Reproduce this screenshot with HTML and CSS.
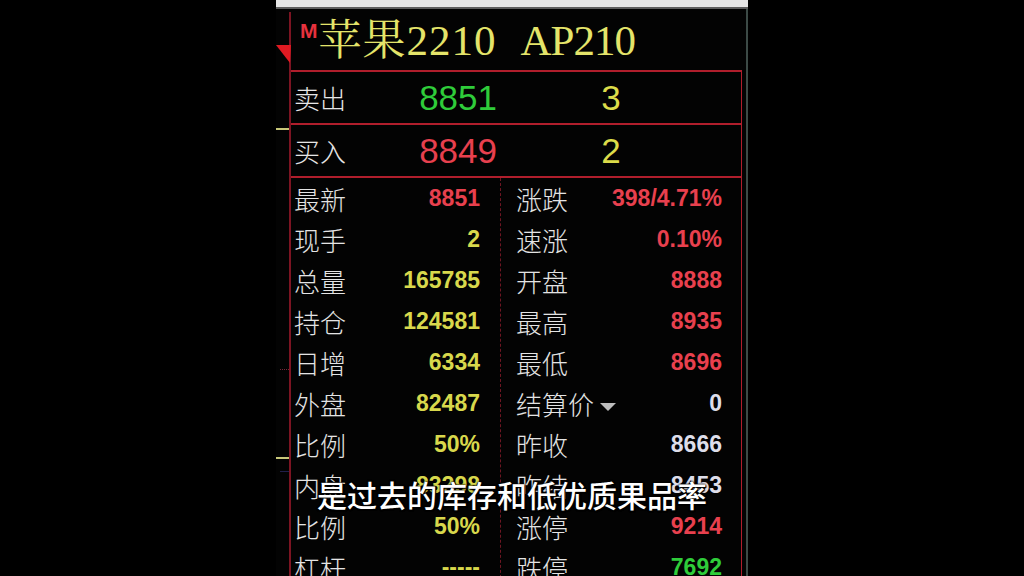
FILE: index.html
```html
<!DOCTYPE html>
<html lang="zh-CN">
<head>
<meta charset="utf-8">
<title>苹果2210</title>
<link rel="stylesheet" href="styles.css">
</head>
<body>
<div class="screen">
  <div class="panel">
    <div class="topbar"></div>
    <div class="frame">
      <div class="gutter">
        <svg class="marker" width="15" height="18" viewBox="0 0 15 18"><polygon points="0,0 15,0 14,18" fill="#e01a22"/></svg>
        <span class="tick tick-a"></span>
        <span class="tick tick-b"></span>
        <span class="tick tick-c"></span>
        <span class="tick tick-d"></span>
      </div>
      <div class="main">
        <div class="title"><span class="badge">M</span><span class="name">苹果2210</span><span class="code">AP210</span></div>
        <div class="quote">
          <div class="qrow"><span class="qlabel">卖出</span><span class="qprice green">8851</span><span class="qvol">3</span></div>
          <div class="qrow"><span class="qlabel">买入</span><span class="qprice red">8849</span><span class="qvol">2</span></div>
        </div>
        <div class="data">
          <div class="col col-left">
            <div class="row"><span class="lbl">最新</span><span class="val red">8851</span></div>
            <div class="row"><span class="lbl">现手</span><span class="val yellow">2</span></div>
            <div class="row"><span class="lbl">总量</span><span class="val yellow">165785</span></div>
            <div class="row"><span class="lbl">持仓</span><span class="val yellow">124581</span></div>
            <div class="row"><span class="lbl">日增</span><span class="val yellow">6334</span></div>
            <div class="row"><span class="lbl">外盘</span><span class="val yellow">82487</span></div>
            <div class="row"><span class="lbl">比例</span><span class="val yellow">50%</span></div>
            <div class="row"><span class="lbl">内盘</span><span class="val yellow">83298</span></div>
            <div class="row"><span class="lbl">比例</span><span class="val yellow">50%</span></div>
            <div class="row"><span class="lbl">杠杆</span><span class="val yellow">-----</span></div>
          </div>
          <div class="col col-right">
            <div class="row"><span class="lbl">涨跌</span><span class="val red">398/4.71%</span></div>
            <div class="row"><span class="lbl">速涨</span><span class="val red">0.10%</span></div>
            <div class="row"><span class="lbl">开盘</span><span class="val red">8888</span></div>
            <div class="row"><span class="lbl">最高</span><span class="val red">8935</span></div>
            <div class="row"><span class="lbl">最低</span><span class="val red">8696</span></div>
            <div class="row"><span class="lbl">结算价<span class="caret"></span></span><span class="val white">0</span></div>
            <div class="row"><span class="lbl">昨收</span><span class="val white">8666</span></div>
            <div class="row"><span class="lbl">昨结</span><span class="val white">8453</span></div>
            <div class="row"><span class="lbl">涨停</span><span class="val red">9214</span></div>
            <div class="row"><span class="lbl">跌停</span><span class="val green">7692</span></div>
          </div>
        </div>
      </div>
      <div class="edge"></div>
    </div>
  </div>
  <div class="subtitle">是过去的库存和低优质果品率</div>
</div>
</body>
</html>
```

FILE: styles.css
```css
* { box-sizing: border-box; }
html, body {
  margin: 0;
  padding: 0;
  background: #000;
}
body {
  width: 1024px;
  height: 576px;
  overflow: hidden;
  font-family: "Noto Sans CJK SC", "Liberation Sans", sans-serif;
}
.screen {
  position: relative;
  width: 1024px;
  height: 576px;
  overflow: hidden;
  background: #000;
}
.panel {
  margin-left: 276px;
  width: 472px;
  height: 576px;
  display: flex;
  flex-direction: column;
  background: #030303;
}
.topbar {
  height: 9px;
  flex: none;
  background: #e6e6e6;
  border-bottom: 2px solid #5e5e5e;
}
.frame {
  flex: 1;
  display: flex;
  min-height: 0;
}
.gutter {
  position: relative;
  width: 13px;
  flex: none;
}
.marker {
  position: absolute;
  left: 0;
  top: 36px;
}
.tick {
  position: absolute;
  left: 0;
  width: 13px;
  height: 2px;
}
.tick-a { top: 119px; background: #c8c87a; }
.tick-b { top: 448px; background: #c8c87a; }
.tick-c { top: 360px; left: 4px; width: 9px; height: 1px; border-top: 1px dotted #7a2838; }
.tick-d { top: 462px; left: 4px; width: 9px; height: 1px; background: #20204a; }
.main {
  width: 457px;
  flex: none;
  margin-top: 3px;
  border-left: 2px solid #7c1422;
  display: flex;
  flex-direction: column;
  overflow: hidden;
}
.edge {
  width: 2px;
  flex: none;
  background: #3c4a46;
}
.title {
  height: 58px;
  flex: none;
  display: flex;
  align-items: flex-start;
  padding-left: 9px;
}
.badge {
  font-family: "Liberation Sans", sans-serif;
  font-weight: bold;
  font-size: 21px;
  line-height: 1;
  color: #e8323e;
  margin-top: 8px;
}
.name,
.code {
  margin-top: 5px;
  font-family: "Liberation Serif", "Noto Serif CJK SC", "Noto Sans CJK SC", serif;
  font-size: 43px;
  line-height: 48px;
  color: #e4e46a;
  white-space: nowrap;
}
.name {
  margin-left: 1px;
  letter-spacing: 1px;
}
.code {
  margin-left: 24px;
  letter-spacing: -1px;
}
.quote {
  flex: none;
  width: 451px;
  border-top: 2px solid #b01e2c;
  border-right: 1px solid #b01e2c;
}
.qrow {
  height: 53px;
  display: grid;
  grid-template-columns: 100px 106px 228px;
  align-items: center;
  border-bottom: 2px solid #b01e2c;
}
.qlabel {
  padding-left: 3px;
  font-size: 26px;
  font-weight: 300;
  color: #e6e6e6;
  line-height: 1;
}
.qprice {
  text-align: right;
  font-family: "Liberation Sans", sans-serif;
  font-size: 35px;
  line-height: 1;
}
.qvol {
  text-align: center;
  font-family: "Liberation Sans", sans-serif;
  font-size: 35px;
  line-height: 1;
  color: #dcdc4a;
}
.data {
  flex: 1;
  width: 451px;
  display: grid;
  grid-template-columns: 209px 1fr;
  border-right: 1px solid #b01e2c;
}
.col {
  display: flex;
  flex-direction: column;
}
.col-right {
  border-left: 1px dashed #6e1622;
}
.row {
  height: 41px;
  flex: none;
  display: flex;
  align-items: center;
  justify-content: space-between;
}
.col-left .row { padding: 0 20px 0 3px; }
.col-right .row { padding: 0 19px 0 15px; }
.lbl {
  font-size: 26px;
  font-weight: 300;
  line-height: 1;
  color: #e4e4e4;
  display: flex;
  align-items: center;
}
.caret {
  width: 0;
  height: 0;
  margin-left: 6px;
  margin-top: 6px;
  border-left: 8px solid transparent;
  border-right: 8px solid transparent;
  border-top: 8px solid #bdbdbd;
}
.val {
  font-family: "Liberation Sans", sans-serif;
  font-weight: bold;
  font-size: 23px;
  line-height: 1;
}
.red { color: #e8404e; }
.green { color: #2fcc3a; }
.yellow { color: #d8d84c; }
.white { color: #dedeea; }
.subtitle {
  position: absolute;
  left: 0;
  right: 0;
  top: 477px;
  text-align: center;
  font-family: "Noto Sans CJK SC", sans-serif;
  font-weight: 500;
  font-size: 30px;
  line-height: 34px;
  color: #ffffff;
  text-shadow: 0 0 2px #000, 0 0 2px #000, 1px 1px 1px #000;
}
```
